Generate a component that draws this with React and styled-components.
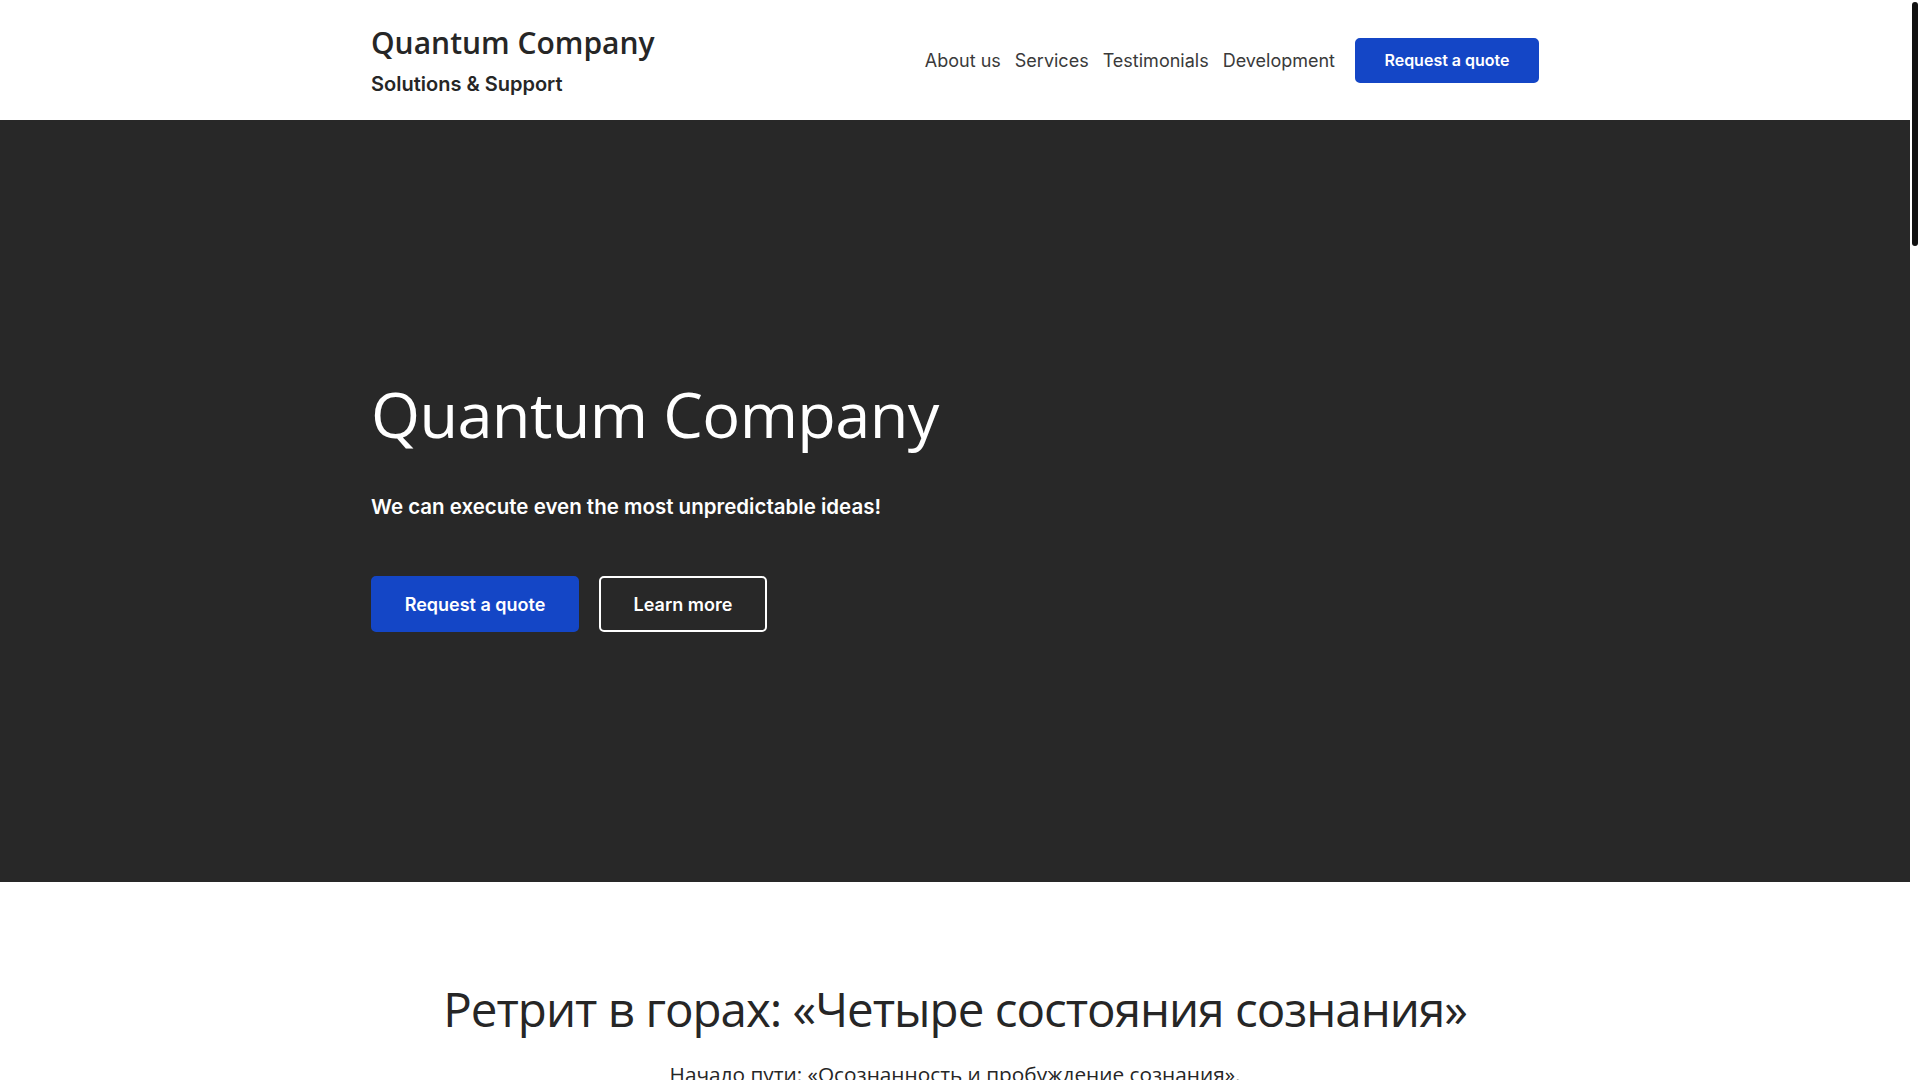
import React from 'react'
import styled, { createGlobalStyle } from 'styled-components'

const GlobalStyle = createGlobalStyle`
    html, body {
        margin: 0;
        padding: 0;
        overflow: hidden;
    }
    body {
        font-family: Inter, 'Liberation Sans', sans-serif;
        color: #262626;
        background: #ffffff;
    }
`

const Viewport = styled.div`
    height: 100vh;
    overflow-y: auto;
    scrollbar-width: none;
    &::-webkit-scrollbar {
        display: none;
    }
`

// page sits beside a 10px scrollbar gutter
const Page = styled.div`
    margin-right: 10px;
`

const ScrollThumb = styled.div`
    position: fixed;
    top: 2px;
    right: 2px;
    width: 6px;
    height: 244px;
    border-radius: 3px;
    background: #111111;
`

const Container = styled.div`
    width: 1168px;
    margin: 0 auto;
`

const Header = styled.header`
    height: 120px;
    background: #ffffff;
    .inner{
        height: 100%;
        display: flex;
        align-items: center;
        justify-content: space-between;
    }
`

const Logo = styled.a`
    display: flex;
    flex-direction: column;
    gap: 11px;
    text-decoration: none;
    color: #262626;
    .name{
        font-family: 'Open Sans', sans-serif;
        font-weight: 600;
        font-size: 30px;
        line-height: 36px;
    }
    .tag{
        font-family: Inter, sans-serif;
        font-weight: 600;
        font-size: 20px;
        line-height: 24px;
    }
`

const Nav = styled.nav`
    display: flex;
    align-items: center;
    .links{
        display: flex;
        gap: 14px;
        margin-right: 20px;
    }
    .link{
        font-family: Inter, sans-serif;
        font-size: 18px;
        color: #3a3a3a;
        text-decoration: none;
    }
`

const Button = styled.a`
    display: inline-flex;
    align-items: center;
    justify-content: center;
    box-sizing: border-box;
    height: ${p => p.$small ? '45px' : '56px'};
    width: ${p => p.$w}px;
    border-radius: 5px;
    font-family: Inter, sans-serif;
    font-weight: 600;
    font-size: ${p => p.$small ? '16px' : '18px'};
    color: #ffffff;
    text-decoration: none;
    background: ${p => p.$outline ? 'transparent' : '#1446c6'};
    border: 2px solid ${p => p.$outline ? '#ffffff' : '#1446c6'};
`

const Hero = styled.section`
    background: #282828;
    height: 762px;
    box-sizing: border-box;
    padding-top: 256px;
    h1{
        margin: 0;
        font-family: 'Open Sans', sans-serif;
        font-weight: 500;
        font-size: 63px;
        line-height: 76px;
        color: #ffffff;
        letter-spacing: -0.6px;
    }
    p{
        margin: 41px 0 0;
        font-family: Inter, sans-serif;
        font-weight: 600;
        font-size: 20.5px;
        line-height: 28px;
        color: #ffffff;
    }
    .actions{
        display: flex;
        gap: 20px;
        margin-top: 55px;
    }
`

const Retreat = styled.section`
    padding: 96px 0 200px;
    text-align: center;
    h2{
        margin: 0;
        font-family: 'Open Sans', sans-serif;
        font-weight: 500;
        font-size: 47.5px;
        line-height: 62px;
        color: #262626;
        letter-spacing: -1px;
    }
    .lead{
        margin: 21px 0 0;
        font-family: 'Open Sans', sans-serif;
        font-size: 20.8px;
        line-height: 26px;
        color: #262626;
    }
`

const Stage = styled.div`
    max-width: 780px;
    margin: 60px auto 0;
    text-align: left;
    h3{
        font-family: 'Open Sans', sans-serif;
        font-weight: 600;
        font-size: 26px;
        margin: 0 0 16px;
    }
    p{
        font-family: Inter, sans-serif;
        font-size: 17px;
        line-height: 30px;
        color: #444;
        margin: 0 0 14px;
    }
`

const stages = [
    {
        title: 'День первый: «Осознанность и пробуждение сознания»',
        text: 'Знакомство с группой, практики дыхания и внимания, прогулка по горной тропе и вечерний круг.'
    },
    {
        title: 'День второй: «Тело и движение»',
        text: 'Утренняя йога на рассвете, медитация в движении, работа с телесными ощущениями и отдых у озера.'
    },
    {
        title: 'День третий: «Тишина»',
        text: 'День молчания, созерцательные практики, восхождение на перевал и наблюдение за звёздами.'
    },
    {
        title: 'День четвёртый: «Интеграция»',
        text: 'Подведение итогов, индивидуальные консультации, общий ужин и возвращение домой.'
    }
]

export default function App() {
    return (
        <Viewport>
            <GlobalStyle />
            <Page>
                <Header>
                    <Container className="inner">
                        <Logo href="#">
                            <span className="name">Quantum Company</span>
                            <span className="tag">Solutions &amp; Support</span>
                        </Logo>
                        <Nav>
                            <div className="links">
                                <a className="link" href="#">About us</a>
                                <a className="link" href="#">Services</a>
                                <a className="link" href="#">Testimonials</a>
                                <a className="link" href="#">Development</a>
                            </div>
                            <Button $small $w={184} href="#">Request a quote</Button>
                        </Nav>
                    </Container>
                </Header>

                <Hero>
                    <Container>
                        <h1>Quantum Company</h1>
                        <p>We can execute even the most unpredictable ideas!</p>
                        <div className="actions">
                            <Button $w={208} href="#">Request a quote</Button>
                            <Button $outline $w={168} href="#">Learn more</Button>
                        </div>
                    </Container>
                </Hero>

                <Retreat>
                    <Container>
                        <h2>Ретрит в горах: «Четыре состояния сознания»</h2>
                        <p className="lead">Начало пути: «Осознанность и пробуждение сознания».</p>
                        {stages.map((s) => (
                            <Stage key={s.title}>
                                <h3>{s.title}</h3>
                                <p>{s.text}</p>
                                <p>Занятия проходят в небольших группах под руководством опытных инструкторов. Все необходимое снаряжение предоставляется на месте.</p>
                                <p>Проживание в уютном гостевом доме, трёхразовое питание из местных продуктов, трансфер из аэропорта и обратно.</p>
                                <p>Количество мест ограничено. Оставьте заявку, и мы свяжемся с вами, чтобы ответить на все вопросы.</p>
                            </Stage>
                        ))}
                    </Container>
                </Retreat>
            </Page>
            <ScrollThumb />
        </Viewport>
    )
}
